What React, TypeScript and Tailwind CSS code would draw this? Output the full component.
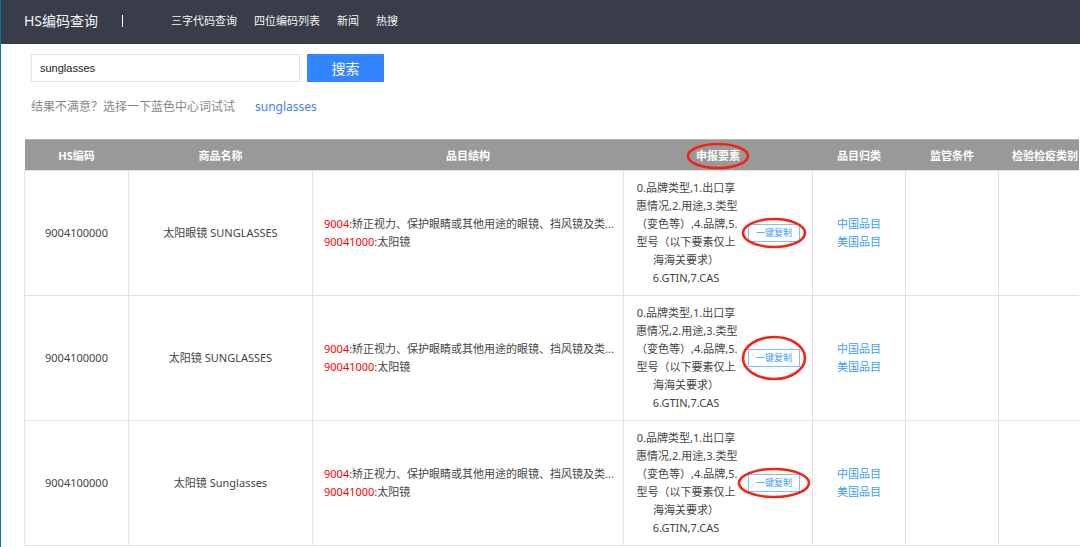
import { useState } from "react";

const navLinks = ["三字代码查询", "四位编码列表", "新闻", "热搜"];

const columns = [
  { title: "HS编码", width: "w-[104px]" },
  { title: "商品名称", width: "w-[184px]" },
  { title: "品目结构", width: "w-[311px]" },
  { title: "申报要素", width: "w-[189px]", circled: true },
  { title: "品目归类", width: "w-[93px]" },
  { title: "监管条件", width: "w-[93px]" },
  { title: "检验检疫类别", width: "w-[93px]" },
];

const elements = [
  "0.品牌类型,1.出口享",
  "惠情况,2.用途,3.类型",
  "（变色等）,4.品牌,5.",
  "型号（以下要素仅上",
  "海海关要求）",
  "6.GTIN,7.CAS",
];

const rows = [
  { code: "9004100000", name: "太阳眼镜 SUNGLASSES", rx: 31, ry: 14 },
  { code: "9004100000", name: "太阳镜 SUNGLASSES", rx: 31, ry: 21 },
  { code: "9004100000", name: "太阳镜 Sunglasses", rx: 35, ry: 14 },
];

export default function App() {
  return (
    <div className="h-screen overflow-hidden border-l border-[#0a78a6] bg-white font-['Noto_Sans','Noto_Sans_CJK_SC',sans-serif] text-[11px] leading-[18px] text-[#444]">
      <Navbar />
      <Search />
      <ResultTable />
    </div>
  );
}

function Navbar() {
  return (
    <header className="flex h-11 items-center bg-[#393d49] pb-0.5 pl-[23px] text-[#f4f4f5]">
      <h1 className="text-sm">HS编码查询</h1>
      <span className="ml-6 h-3 w-px bg-white" />
      <nav className="ml-12 flex gap-[17px]">
        {navLinks.map((link) => (
          <a key={link} href="#">
            {link}
          </a>
        ))}
      </nav>
    </header>
  );
}

function Search() {
  const [keyword, setKeyword] = useState("sunglasses");

  return (
    <div className="px-[30px] pt-[10px]">
      <form className="flex gap-[7px]" onSubmit={(e) => e.preventDefault()}>
        <input
          type="text"
          aria-label="HS编码查询"
          value={keyword}
          onChange={(e) => setKeyword(e.target.value)}
          className="h-7 w-[269px] border border-[#e2e2e2] px-2 font-['Liberation_Sans',sans-serif] text-[11px] text-[#222] outline-none"
        />
        <button type="submit" className="h-7 w-[77px] bg-[#3385ff] pt-0.5 text-sm text-white">
          搜索
        </button>
      </form>
      <p className="mt-4 flex gap-5 text-xs leading-[18px] text-[#888]">
        结果不满意？选择一下蓝色中心词试试
        <a href="#" className="text-[#3d7eff]">
          sunglasses
        </a>
      </p>
    </div>
  );
}

function ResultTable() {
  return (
    <div className="mt-[23px] mr-px ml-[23px] overflow-hidden">
      <table className="w-full min-w-[1067px] table-fixed border-collapse text-center">
        <thead>
          <tr className="h-[31px] border-t border-[#b3b3b3] bg-[#999] text-white">
            {columns.map((col) => (
              <th key={col.title} className={`${col.width} p-0 pt-0.5 font-bold whitespace-nowrap`}>
                <span className="relative">
                  {col.title}
                  {col.circled && <Circle rx={30} ry={12} />}
                </span>
              </th>
            ))}
          </tr>
        </thead>
        <tbody>
          {rows.map((row, i) => (
            <tr key={i} className="h-[125px] *:border *:border-[#e2e2e2] *:p-0">
              <td>{row.code}</td>
              <td>{row.name}</td>
              <td>
                <div className="pl-[11px] text-left whitespace-nowrap">
                  <p>
                    <span className="text-[#ff0000]">9004</span>
                    :矫正视力、保护眼睛或其他用途的眼镜、挡风镜及类...
                  </p>
                  <p>
                    <span className="text-[#ff0000]">90041000</span>:太阳镜
                  </p>
                </div>
              </td>
              <td>
                <div className="flex items-center justify-center gap-3">
                  <div className="w-[100px] whitespace-nowrap">
                    {elements.map((line) => (
                      <p key={line}>{line}</p>
                    ))}
                  </div>
                  <div className="relative">
                    <button
                      type="button"
                      className="block h-[18px] w-[52px] border border-[#7cc0ff] text-[9px] leading-4 text-[#3b9cff]"
                    >
                      一键复制
                    </button>
                    <Circle rx={row.rx} ry={row.ry} />
                  </div>
                </div>
              </td>
              <td className="text-[#3b9cff]">
                <a href="#" className="block">
                  中国品目
                </a>
                <a href="#" className="block">
                  美国品目
                </a>
              </td>
              <td></td>
              <td></td>
            </tr>
          ))}
        </tbody>
      </table>
    </div>
  );
}

interface CircleProps {
  rx: number;
  ry: number;
}

// red pen mark centred over its parent
function Circle({ rx, ry }: CircleProps) {
  const w = rx * 2 + 4;
  const h = ry * 2 + 4;
  return (
    <svg
      width={w}
      height={h}
      viewBox={`0 0 ${w} ${h}`}
      className="pointer-events-none absolute top-1/2 left-1/2 max-w-none -translate-x-1/2 -translate-y-1/2"
    >
      <ellipse cx={w / 2} cy={h / 2} rx={rx} ry={ry} fill="none" stroke="#f52314" strokeWidth="2.6" />
    </svg>
  );
}
